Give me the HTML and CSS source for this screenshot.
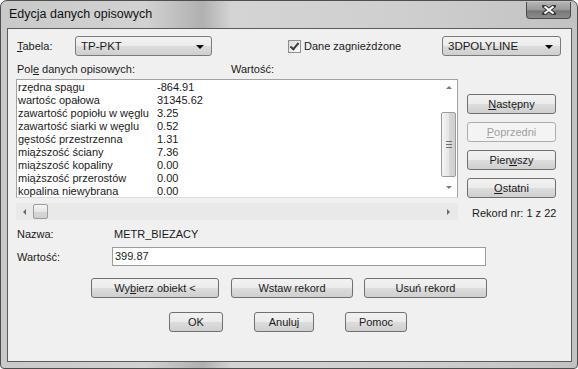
FILE: index.html
```html
<!DOCTYPE html>
<html lang="pl">
    <head>
        <meta charset="UTF-8" />
        <title>Edycja danych opisowych</title>
        <link rel="stylesheet" href="styles.css">
    </head>
    <body>
        <div class="window">
            <!-- Title bar -->
            <div class="titlebar">
                <span class="title">Edycja danych opisowych</span>
                <div class="close">
                    <svg width="14" height="10" viewBox="0 0 14 10">
                        <path d="M2 1 L12 9 M12 1 L2 9" stroke="#3a3a3a" stroke-width="4" stroke-linecap="square"/>
                        <path d="M2.5 1.5 L11.5 8.5 M11.5 1.5 L2.5 8.5" stroke="#ffffff" stroke-width="2"/>
                    </svg>
                </div>
            </div>

            <div class="client">
                <!-- Row: table, nested, type -->
                <div class="row top-row">
                    <span class="lbl lbl-tabela"><u>T</u>abela:</span>
                    <div class="combo combo-table">TP-PKT<span class="arrow"></span></div>
                    <span class="check checked"></span>
                    <span class="lbl check-lbl">Dane zagnieżdżone</span>
                    <div class="combo combo-type">3DPOLYLINE<span class="arrow"></span></div>
                </div>

                <div class="row head-row">
                    <span class="lbl lbl-field">Pol<u>e</u> danych opisowych:</span>
                    <span class="lbl">Wartość:</span>
                </div>

                <div class="main">
                    <div class="list-col">
                        <div class="listbox">
                            <div class="rows">
                                <div class="item"><span class="name">rzędna spągu</span><span>-864.91</span></div>
                                <div class="item"><span class="name">wartośc opałowa</span><span>31345.62</span></div>
                                <div class="item"><span class="name">zawartość popiołu w węglu</span><span>3.25</span></div>
                                <div class="item"><span class="name">zawartość siarki w węglu</span><span>0.52</span></div>
                                <div class="item"><span class="name">gęstość przestrzenna</span><span>1.31</span></div>
                                <div class="item"><span class="name">miąższość ściany</span><span>7.36</span></div>
                                <div class="item"><span class="name">miąższość kopaliny</span><span>0.00</span></div>
                                <div class="item"><span class="name">miąższość przerostów</span><span>0.00</span></div>
                                <div class="item"><span class="name">kopalina niewybrana</span><span>0.00</span></div>
                            </div>
                            <div class="vscroll">
                                <span class="tri tri-up"></span>
                                <div class="vthumb"><span class="grip"></span></div>
                                <span class="tri tri-down"></span>
                            </div>
                        </div>
                        <div class="hscroll">
                            <span class="tri tri-left"></span>
                            <div class="hthumb"></div>
                            <span class="tri tri-right"></span>
                        </div>
                    </div>

                    <div class="nav-col">
                        <button class="btn nav-btn"><u>N</u>astępny</button>
                        <button class="btn nav-btn" disabled><u>P</u>oprzedni</button>
                        <button class="btn nav-btn">Pier<u>w</u>szy</button>
                        <button class="btn nav-btn"><u>O</u>statni</button>
                        <span class="record">Rekord nr: 1 z 22</span>
                    </div>
                </div>

                <div class="row name-row">
                    <span class="lbl lbl-left">Nazwa:</span>
                    <span class="lbl">METR_BIEZACY</span>
                </div>

                <div class="row value-row">
                    <span class="lbl lbl-left">Wartość:</span>
                    <div class="textbox">399.87</div>
                </div>

                <div class="row action-row">
                    <button class="btn btn-pick">Wy<u>b</u>ierz obiekt &lt;</button>
                    <button class="btn btn-insert">Wstaw rekord</button>
                    <button class="btn btn-delete">Usuń rekord</button>
                </div>

                <div class="row dialog-row">
                    <button class="btn btn-ok">OK</button>
                    <button class="btn btn-cancel">Anuluj</button>
                    <button class="btn btn-help">Pomoc</button>
                </div>
            </div>
        </div>
    </body>
</html>
```

FILE: styles.css
```css
/* Dialog window */
body {
    margin: 0;
    background-color: #ffffff;
    font-family: "Liberation Sans", Arial, sans-serif;
}

.window {
    width: 578px;
    height: 369px;
    box-sizing: border-box;
    border: 1px solid #4e4e4e;
    border-radius: 7px 7px 4px 4px;
    padding: 0 5px 6px 6px;
    background: linear-gradient(to right, #c9c9c9 0%, #d2d2d2 25%, #b0b0b0 35%, #d4d4d4 40%, #cfcfcf 70%, #c2c2c2 100%);
    display: flex;
    flex-direction: column;
}

/* Title bar */
.titlebar {
    height: 27px;
    display: flex;
    align-items: flex-start;
    justify-content: space-between;
}

.title {
    margin: 6px 0 0 2px;
    font-size: 12.5px;
    color: #111111;
}

.close {
    width: 45px;
    height: 17px;
    margin: 1px 1px 0 0;
    box-sizing: border-box;
    border: 1px solid #4a4a4a;
    border-top: none;
    border-radius: 0 0 4px 4px;
    background: linear-gradient(to bottom, #b4b4b4 0%, #989898 50%, #767676 55%, #8c8c8c 100%);
    display: flex;
    align-items: center;
    justify-content: center;
}

/* Client area */
.client {
    flex: 1;
    border: 1px solid #5c5c5c;
    background-color: #f0f0f0;
    padding: 7px 10px 0 9px;
    font-size: 11px;
    color: #1a1a1a;
}

.row {
    display: flex;
    align-items: center;
}

.lbl {
    font-size: 11px;
    white-space: nowrap;
}

/* Top row */
.top-row {
    height: 20px;
}

.lbl-tabela {
    width: 58px;
}

.combo {
    position: relative;
    height: 20px;
    box-sizing: border-box;
    border: 1px solid #7a7a7a;
    border-radius: 3px;
    background: linear-gradient(to bottom, #f3f3f3 0%, #ebebeb 50%, #dcdcdc 51%, #cfcfcf 100%);
    padding-left: 5px;
    font-size: 11.5px;
    line-height: 18px;
}

.combo-table {
    width: 137px;
}

.combo-type {
    width: 119px;
    margin-left: auto;
}

.arrow {
    position: absolute;
    right: 7px;
    top: 8px;
    border-left: 4px solid transparent;
    border-right: 4px solid transparent;
    border-top: 4px solid #000000;
}

.check {
    width: 13px;
    height: 13px;
    box-sizing: border-box;
    margin-left: 76px;
    border: 1px solid #8e8e8e;
    background: linear-gradient(to bottom right, #dcdcdc, #fbfbfb);
    position: relative;
}

.check.checked::after {
    content: "";
    position: absolute;
    left: 3px;
    top: 0px;
    width: 3px;
    height: 7px;
    border-right: 2px solid #3c3c3c;
    border-bottom: 2px solid #3c3c3c;
    transform: rotate(40deg);
}

.check-lbl {
    margin-left: 3px;
}

/* Column headers */
.head-row {
    height: 16px;
    margin-top: 5px;
}

.lbl-field {
    width: 214px;
}

/* List and navigation */
.main {
    display: flex;
    margin-top: 2px;
}

.list-col {
    width: 442px;
    margin-left: -1px;
}

.listbox {
    display: flex;
    height: 119px;
    box-sizing: border-box;
    border: 1px solid #a3a3a3;
    border-bottom: 1px solid #dcdcdc;
    background-color: #ffffff;
}

.rows {
    flex: 1;
    padding: 1px 0 0 1px;
}

.item {
    display: flex;
    height: 13px;
    line-height: 13px;
    font-size: 11px;
    white-space: nowrap;
}

.item .name {
    width: 139px;
}

.vscroll {
    width: 17px;
    display: flex;
    flex-direction: column;
    align-items: center;
}

.tri {
    width: 0;
    height: 0;
}

.tri-up {
    margin-top: 6px;
    border-left: 3px solid transparent;
    border-right: 3px solid transparent;
    border-bottom: 3px solid #7a7a7a;
}

.tri-down {
    margin-top: 9px;
    border-left: 3px solid transparent;
    border-right: 3px solid transparent;
    border-top: 3px solid #7a7a7a;
}

.vthumb {
    width: 15px;
    height: 65px;
    margin-top: 23px;
    box-sizing: border-box;
    border: 1px solid #9c9c9c;
    border-radius: 2px;
    background: linear-gradient(to right, #f4f4f4 0%, #e6e6e6 50%, #d6d6d6 55%, #d0d0d0 100%);
    display: flex;
    align-items: center;
    justify-content: center;
}

.grip {
    width: 6px;
    height: 5px;
    border-top: 1px solid #6e6e6e;
    border-bottom: 1px solid #6e6e6e;
    background: linear-gradient(to bottom, transparent 40%, #6e6e6e 40%, #6e6e6e 60%, transparent 60%);
}

.hscroll {
    height: 17px;
    margin-top: 5px;
    background-color: #e9e9e9;
    display: flex;
    align-items: center;
}

.tri-left {
    margin-left: 7px;
    border-top: 3px solid transparent;
    border-bottom: 3px solid transparent;
    border-right: 3px solid #6a6a6a;
}

.hthumb {
    width: 15px;
    height: 15px;
    margin-left: 7px;
    box-sizing: border-box;
    border: 1px solid #9c9c9c;
    border-radius: 2px;
    background: linear-gradient(to bottom, #f4f4f4 0%, #e6e6e6 50%, #d6d6d6 55%, #d0d0d0 100%);
}

.tri-right {
    margin-left: auto;
    margin-right: 8px;
    border-top: 3px solid transparent;
    border-bottom: 3px solid transparent;
    border-left: 3px solid #6a6a6a;
}

.nav-col {
    display: flex;
    flex-direction: column;
    margin-left: 9px;
    padding-top: 15px;
    gap: 8px;
}

/* Buttons */
.btn {
    height: 20px;
    box-sizing: border-box;
    padding: 0;
    border: 1px solid #707070;
    border-radius: 3px;
    background: linear-gradient(to bottom, #f2f2f2 0%, #ebebeb 50%, #dddddd 51%, #cfcfcf 100%);
    font-family: "Liberation Sans", Arial, sans-serif;
    font-size: 11px;
    color: #1a1a1a;
}

.btn:disabled {
    border-color: #adadad;
    background: #f4f4f4;
    color: #a0a0a0;
}

.nav-btn {
    width: 89px;
}

.record {
    margin: 1px 0 0 5px;
    font-size: 11px;
    white-space: nowrap;
}

/* Name and value */
.name-row {
    height: 14px;
    margin-top: 7px;
}

.lbl-left {
    width: 96px;
    margin-right: 1px;
}

.value-row {
    height: 19px;
    margin-top: 6px;
}

.lbl-left + .textbox {
    margin-left: -2px;
}

.textbox {
    width: 374px;
    height: 19px;
    box-sizing: border-box;
    border: 1px solid #9c9c9c;
    background-color: #ffffff;
    padding-left: 2px;
    font-size: 11px;
    line-height: 17px;
}

.action-row {
    margin-top: 12px;
    padding-left: 74px;
    gap: 12px;
}

.btn-pick {
    width: 128px;
}

.btn-insert {
    width: 122px;
}

.btn-delete {
    width: 123px;
    margin-left: -1px;
}

.dialog-row {
    margin-top: 14px;
    padding-left: 152px;
}

.btn-ok {
    width: 54px;
}

.btn-cancel {
    width: 60px;
    margin-left: 31px;
}

.btn-help {
    width: 62px;
    margin-left: 31px;
}
```
